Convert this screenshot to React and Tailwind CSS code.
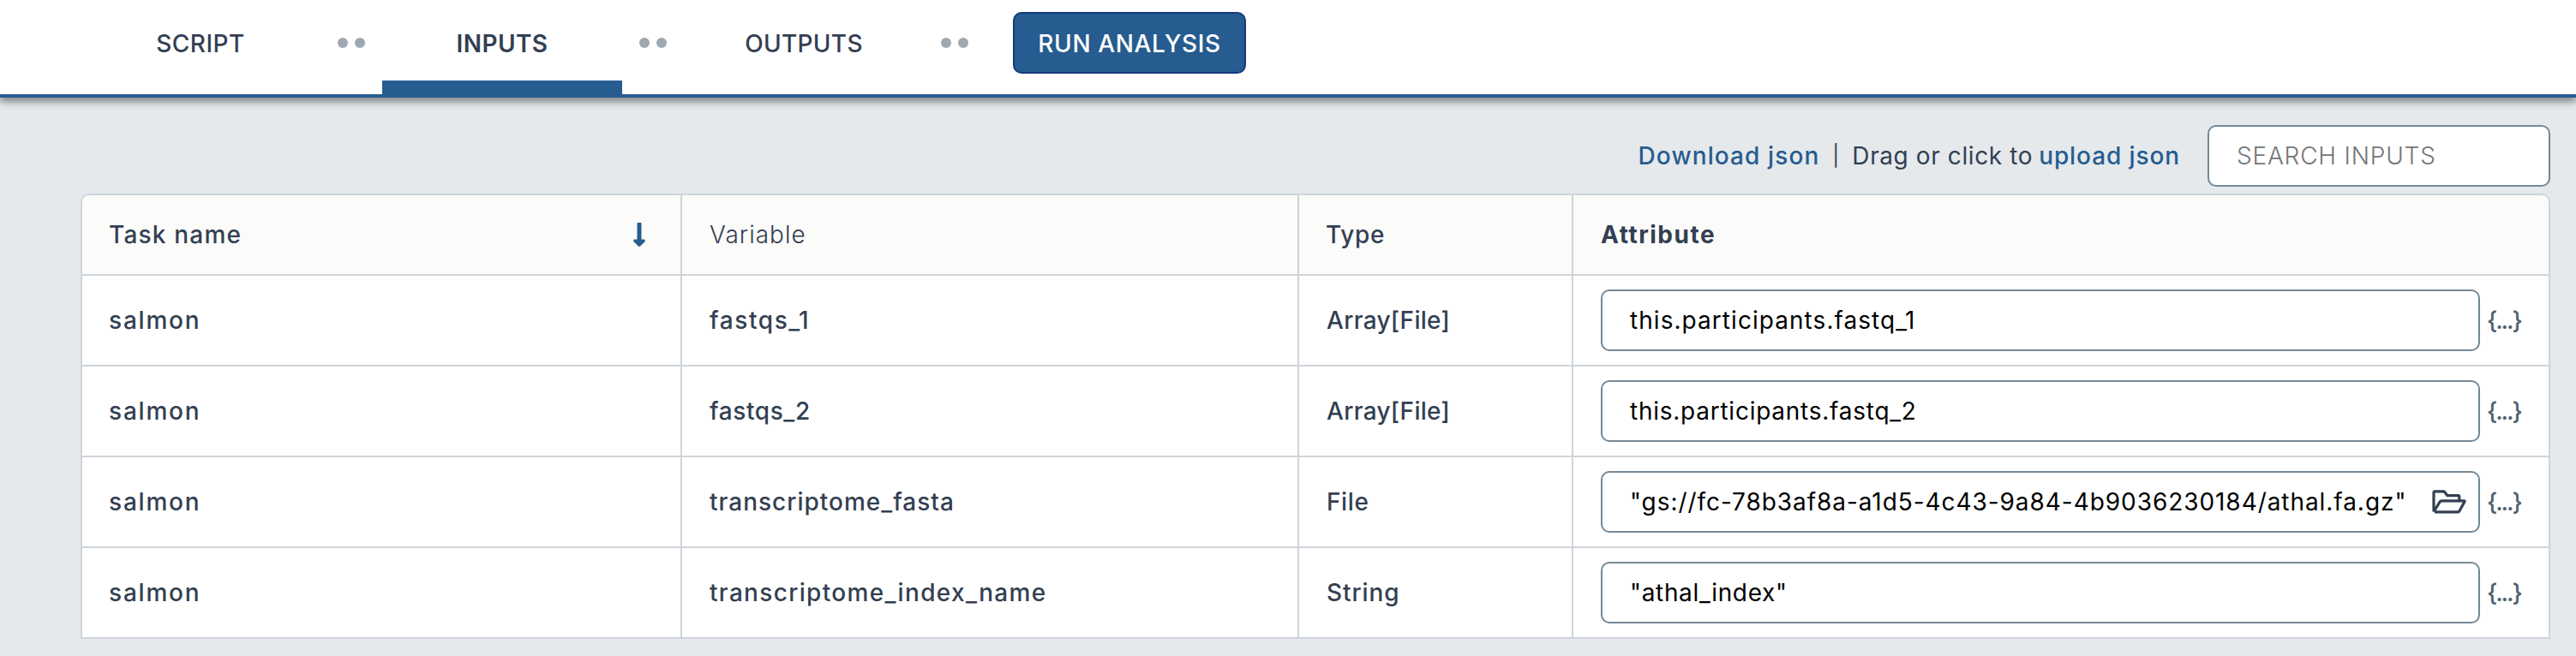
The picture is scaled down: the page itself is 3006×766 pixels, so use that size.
import { FaLongArrowAltDown } from "react-icons/fa";

const rows = [
  { variable: "fastqs_1", vs: "tracking-[1.6px]", type: "Array[File]", ts: "tracking-[0.3px]", value: "this.participants.fastq_1", as: "tracking-[1.05px]" },
  { variable: "fastqs_2", vs: "tracking-[0.6px]", type: "Array[File]", ts: "tracking-[0.3px]", value: "this.participants.fastq_2", as: "tracking-[0.75px]" },
  { variable: "transcriptome_fasta", vs: "tracking-[1px]", type: "File", ts: "tracking-[0.6px]", value: "\"gs://fc-78b3af8a-a1d5-4c43-9a84-4b9036230184/athal.fa.gz\"", as: "tracking-[0.94px]", browse: true },
  { variable: "transcriptome_index_name", vs: "tracking-[1.33px]", type: "String", ts: "tracking-[0.9px]", value: "\"athal_index\"", as: "tracking-[0.65px]" },
];

function Dots() {
  return (
    <div className="mx-5 mt-11 flex gap-2">
      <span className="size-3 rounded-full bg-[#9da8b1]" />
      <span className="size-3 rounded-full bg-[#9da8b1]" />
    </div>
  );
}

function Tab({ children, active }) {
  return (
    <div className="flex h-[110px] w-[280px] flex-col justify-between">
      <div className={active ? "h-[94px] pt-[31px] text-center font-semibold" : "h-[94px] pt-[31px] text-center font-[450]"}>
        {children}
      </div>
      {active && <div className="h-4 bg-[#265c8f]" />}
    </div>
  );
}

function FolderIcon() {
  return (
    <svg className="h-7 w-10 shrink-0" viewBox="0 0 40 28" fill="none" stroke="#333f52" strokeWidth="3.2" strokeLinejoin="round">
      <path d="M2 25.500V3.200Q2 1.900 3.300 1.900H14.200L18 6.700H30.500Q31.800 6.700 31.800 8V12.500M2 25.500L9.400 13.600Q9.900 12.800 11 12.800H37.200Q38.600 12.800 37.900 14L31.800 25Q31.300 25.800 30.300 25.800H3" />
    </svg>
  );
}

export default function App() {
  return (
    <div className="h-[766px] w-[3006px] overflow-hidden bg-[#e5e9ec] font-['Inter',sans-serif] text-[28px] leading-10 text-[#333f52]">
      <nav className="relative flex h-[114px] items-start border-b-4 border-[#265c8f] bg-white pl-[94px] shadow-[0_4px_10px_0_rgba(0,0,0,0.35),0_6px_4px_0_rgba(0,0,0,0.12)]">
        <Tab><span className="tracking-[0.5px]">SCRIPT</span></Tab>
        <Dots />
        <Tab active><span className="tracking-[0.4px]">INPUTS</span></Tab>
        <Dots />
        <Tab><span className="tracking-[0.3px]">OUTPUTS</span></Tab>
        <Dots />
        <button className="mt-[14px] ml-8 h-[72px] w-[272px] rounded-[10px] border-2 border-[#15397c] bg-[#265c8f] pt-px font-[450] whitespace-nowrap text-white">
          <span className="tracking-[0.6px]">RUN ANALYSIS</span>
        </button>
      </nav>
      <div className="flex h-[112px] items-start justify-end pt-8 pr-[30px]">
        <div className="flex h-[72px] items-center whitespace-pre">
          <span className="mr-[15px] font-[450] tracking-[1.1px] text-[#265c8f]">Download json</span>
          <span className="mr-[15px] text-[24px]">|</span>
          <span className="mr-[7px] tracking-[0.6px]">Drag or click to</span>
          <span className="mr-8 font-[450] tracking-[0.9px] text-[#265c8f]">upload json</span>
        </div>
        <div className="flex h-[72px] w-[400px] items-center rounded-[10px] border-2 border-[#748896] bg-white pl-8 text-[#757575]">
          <span className="font-[350] tracking-[0.8px]">SEARCH INPUTS</span>
        </div>
      </div>
      <div className="ml-[94px] w-[2882px] rounded-t-[10px] border-2 border-[#ced4da] bg-white">
        <div className="grid h-[92px] grid-cols-[700px_720px_320px_1fr] rounded-t-[8px] bg-[#fbfbf9]">
          <div className="flex items-center justify-between border-r-2 border-[#ced4da] pr-8 pl-[31px] font-[450]">
            <span className="tracking-[1.2px]">Task name</span>
            <FaLongArrowAltDown className="size-8 text-[#265c8f]" />
          </div>
          <div className="flex items-center border-r-2 border-[#ced4da] pl-8 font-[350]">
            <span className="tracking-[1px]">Variable</span>
          </div>
          <div className="flex items-center border-r-2 border-[#ced4da] pl-[31px] font-[450]">
            <span className="tracking-[0.7px]">Type</span>
          </div>
          <div className="flex items-center pl-8 font-bold">
            <span className="tracking-[1.5px]">Attribute</span>
          </div>
        </div>
        {rows.map((r) => (
          <div key={r.variable} className="grid h-[106px] grid-cols-[700px_720px_320px_1fr] border-t-2 border-[#ced4da] font-[450]">
            <div className="flex items-center border-r-2 border-[#ced4da] pl-[31px]">
              <span className="tracking-[1.8px]">salmon</span>
            </div>
            <div className="flex items-center border-r-2 border-[#ced4da] pl-8">
              <span className={r.vs}>{r.variable}</span>
            </div>
            <div className="flex items-center border-r-2 border-[#ced4da] pl-8">
              <span className={r.ts}>{r.type}</span>
            </div>
            <div className="flex items-center pl-8">
              <div className="flex h-[72px] w-[1026px] items-center justify-between rounded-[10px] border-2 border-[#748896] pr-[14px] pl-8 font-normal whitespace-nowrap text-black">
                <span className={r.as}>{r.value}</span>
                {r.browse && <FolderIcon />}
              </div>
              <span className="ml-2 font-medium tracking-[-2.1px] text-[#4c6272]">{"{...}"}</span>
            </div>
          </div>
        ))}
      </div>
    </div>
  );
}
